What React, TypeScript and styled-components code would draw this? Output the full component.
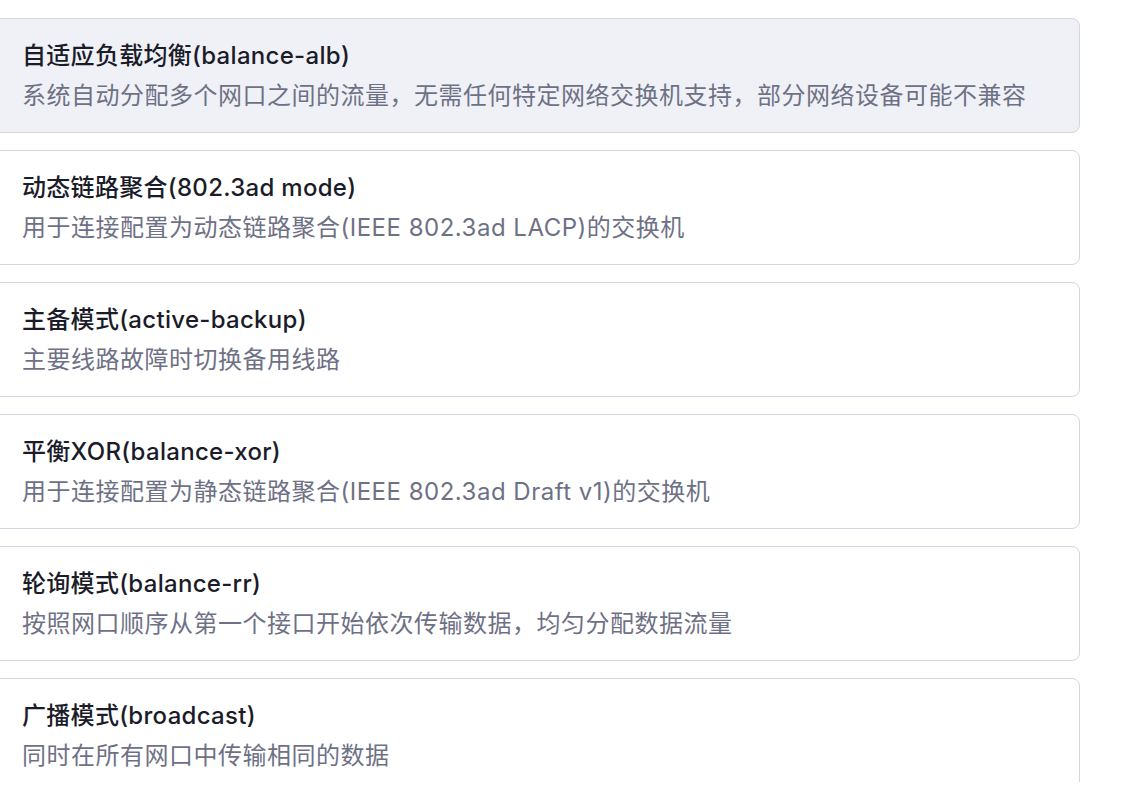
import React from "react";
import styled, { createGlobalStyle } from "styled-components";

const Global = createGlobalStyle`
  html, body { margin: 0; padding: 0; background: #ffffff; }
  body { font-family: "Inter", "Noto Sans CJK SC", sans-serif; }
`;

const Viewport = styled.div`
  height: 782px;
  overflow: hidden;
`;

const List = styled.div`
  display: flex;
  flex-direction: column;
  gap: 17px;
  padding: 18px 52.5px 0 0;
  margin-left: -12px;
`;

const Card = styled.div<{ $active?: boolean }>`
  box-sizing: border-box;
  height: 115px;
  padding: 17.5px 24px 0 33px;
  border: 1.5px solid #d3d5e1;
  border-radius: 8px;
  background: ${(p) => (p.$active ? "#f0f1f7" : "#ffffff")};
  cursor: pointer;
  flex-shrink: 0;
`;

const Title = styled.div`
  font-size: 24px;
  line-height: 38px;
  font-weight: 500;
  color: #1b1c29;
  letter-spacing: 0.3px;
  white-space: nowrap;
`;

const Desc = styled.div`
  margin-top: 2px;
  font-size: 24px;
  line-height: 38px;
  font-weight: 400;
  color: #6e7185;
  letter-spacing: 0.5px;
  white-space: nowrap;
`;

const items = [
  {
    title: "自适应负载均衡(balance-alb)",
    desc: "系统自动分配多个网口之间的流量，无需任何特定网络交换机支持，部分网络设备可能不兼容",
    active: true,
  },
  {
    title: "动态链路聚合(802.3ad mode)",
    desc: "用于连接配置为动态链路聚合(IEEE 802.3ad LACP)的交换机",
  },
  { title: "主备模式(active-backup)", desc: "主要线路故障时切换备用线路" },
  {
    title: "平衡XOR(balance-xor)",
    desc: "用于连接配置为静态链路聚合(IEEE 802.3ad Draft v1)的交换机",
  },
  {
    title: "轮询模式(balance-rr)",
    desc: "按照网口顺序从第一个接口开始依次传输数据，均匀分配数据流量",
  },
  { title: "广播模式(broadcast)", desc: "同时在所有网口中传输相同的数据" },
];

export default function App() {
  return (
    <>
      <Global />
      <Viewport>
        <List>
          {items.map((it) => (
            <Card key={it.title} $active={it.active}>
              <Title>{it.title}</Title>
              <Desc>{it.desc}</Desc>
            </Card>
          ))}
        </List>
      </Viewport>
    </>
  );
}
